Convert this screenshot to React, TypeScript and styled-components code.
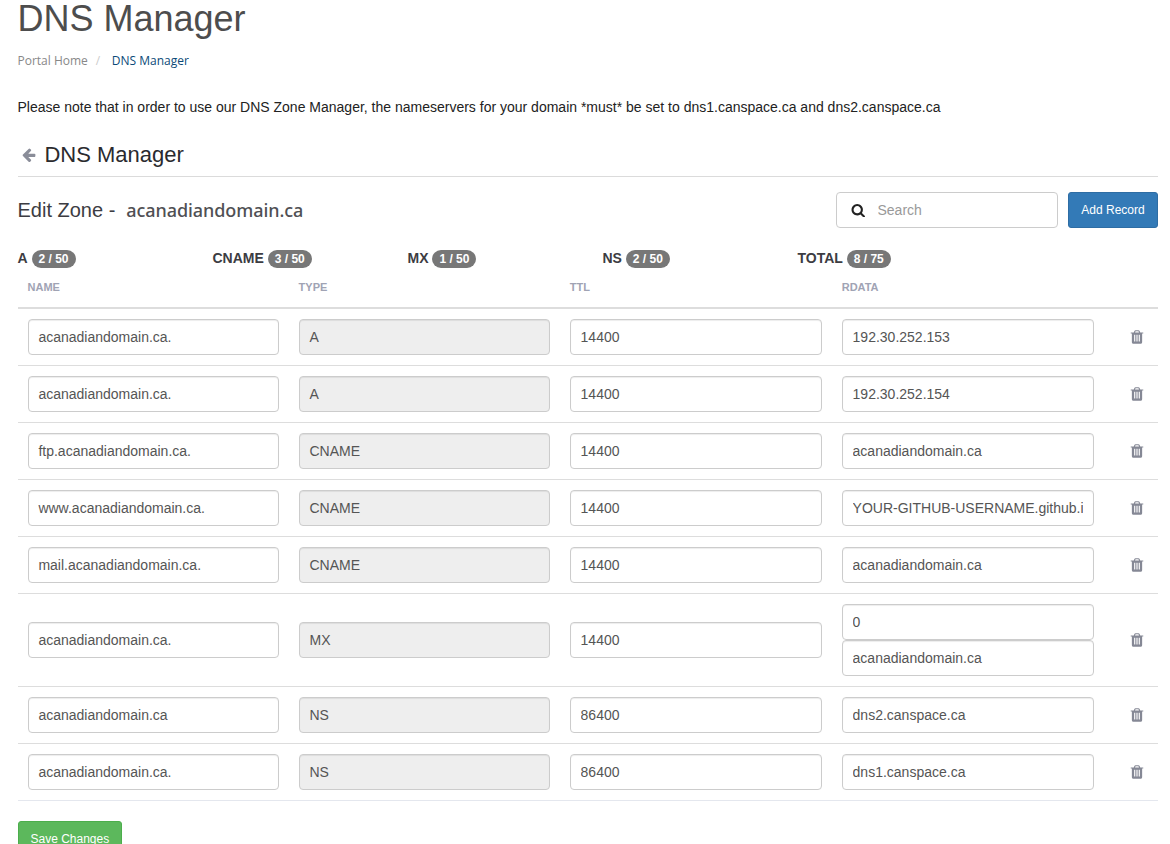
import React from "react";
import styled, { createGlobalStyle } from "styled-components";

const GlobalStyle = createGlobalStyle`
  *, *::before, *::after { box-sizing: border-box; }
  html { overflow: hidden; }
  body {
    margin: 0;
    height: 844px;
    overflow: hidden;
    background: #fff;
    color: #222;
    font: 14px/20px "Liberation Sans", Arial, sans-serif;
  }
`;

const Page = styled.main`
  width: 1140.5px;
  margin-left: 17.5px;
`;

const PageTitle = styled.h1`
  margin: 0;
  height: 51px;
  font-size: 36px;
  line-height: 38px;
  font-weight: 400;
  color: #4d4d4d;
`;

const Breadcrumb = styled.nav`
  display: flex;
  height: 20px;
  font: 12px/20px "Open Sans", sans-serif;
  color: #888;
`;

const Separator = styled.span`
  width: 24px;
  padding-left: 8px;
  color: #ccc;
`;

const Current = styled.span`
  color: #0b4a78;
`;

const Notice = styled.p`
  margin: 26px 0 0;
`;

const SectionHeader = styled.header`
  display: flex;
  align-items: center;
  height: 43px;
  margin-top: 17px;
  padding-left: 3.2px;
  border-bottom: 1px solid #dbdbdb;
`;

const SectionTitle = styled.h2`
  margin: 0 0 0 8.3px;
  font-size: 22px;
  line-height: 30px;
  font-weight: 400;
  color: #2a2a2e;
`;

const Glyph = styled.svg<{ $color: string }>`
  display: block;
  flex: none;
  fill: ${(p) => p.$color};
`;

const Toolbar = styled.div`
  display: flex;
  align-items: center;
  height: 36px;
  margin-top: 15px;
`;

const ZoneTitle = styled.h3`
  display: flex;
  align-items: baseline;
  margin: 0;
  flex: 1;
  font-size: 20px;
  line-height: 30px;
  font-weight: 400;
  color: #3c3c42;
`;

const ZoneName = styled.span`
  margin-left: 11px;
  font-family: "Noto Sans", sans-serif;
  font-size: 18px;
  font-weight: 500;
  letter-spacing: -0.08px;
  line-height: 26px;
  color: #505054;
`;

const SearchBox = styled.div`
  display: flex;
  align-items: center;
  width: 222px;
  height: 36px;
  padding-left: 13.5px;
  border: 1px solid #ccc;
  border-radius: 4px;
  background: #fff;
`;

const SearchInput = styled.input`
  width: 160px;
  margin-left: 12.5px;
  padding: 0;
  border: 0;
  outline: 0;
  font: 14px/20px "Liberation Sans", Arial, sans-serif;
  &::placeholder { color: #999; opacity: 1; }
`;

const Button = styled.button<{ $tone: "primary" | "success" }>`
  height: 36px;
  padding: 0 12px;
  border: 1px solid ${(p) => (p.$tone === "primary" ? "#2e6da4" : "#4cae4c")};
  border-radius: 3px;
  background: ${(p) => (p.$tone === "primary" ? "#337ab7" : "#5cb85c")};
  color: #fff;
  font: 12px/20px "Liberation Sans", Arial, sans-serif;
  white-space: nowrap;
`;

const AddButton = styled(Button)`
  width: 90px;
  margin-left: 10px;
`;

const SaveButton = styled(Button)`
  display: block;
  width: 104.5px;
  margin-top: 20px;
`;

const Quotas = styled.div`
  display: grid;
  grid-template-columns: repeat(5, 195px);
  margin-top: 20px;
  height: 20px;
`;

const Quota = styled.div`
  display: flex;
  align-items: center;
  gap: 3.88px;
  font-weight: 700;
  color: #3c3c42;
`;

const Badge = styled.span`
  height: 18px;
  margin-top: 2px;
  padding: 3px 7px;
  border-radius: 10px;
  background: #777;
  color: #fff;
  font-size: 12px;
  line-height: 12px;
`;

const columns = "271.1px 271.1px 272px 272px 1fr";

const TableHead = styled.div`
  display: grid;
  grid-template-columns: ${columns};
  height: 41px;
  border-bottom: 2px solid #ddd;
  color: #a0a3b4;
  font-size: 11px;
  font-weight: 700;
  line-height: 18px;
`;

const HeadCell = styled.div`
  padding: 10px 10px 0;
`;

const Row = styled.div<{ $last?: boolean }>`
  display: grid;
  grid-template-columns: ${columns};
  align-items: center;
  padding: 10px 0;
  border-bottom: 1px solid ${(p) => (p.$last ? "#e4e7ee" : "#ddd")};
`;

const Cell = styled.div`
  padding: 0 10px;
`;

const Field = styled.input`
  display: block;
  width: 100%;
  height: 36px;
  padding: 6px 9.9px;
  border: 1px solid #ccc;
  border-radius: 4px;
  outline: 0;
  background: #fff;
  box-shadow: inset 0 1px 1px rgba(0, 0, 0, 0.075);
  color: #555;
  font: 14px/20px "Liberation Sans", Arial, sans-serif;
  &:disabled { background: #eee; }
`;

const DeleteCell = styled.div`
  display: flex;
  padding-left: 25.2px;
`;

const ARROW_LEFT =
  "M1664 896v128q0 53-32.500 90.500t-84.500 37.500h-704l293 294q38 36 38 90t-38 90l-75 76q-37 37-90 37-52 0-91-37l-651-652q-37-37-37-90 0-52 37-91l651-650q38-38 91-38 52 0 90 38l75 74q38 38 38 91t-38 91l-293 293h704q52 0 84.500 37.500t32.500 90.500z";
const SEARCH =
  "M1216 832q0-185-131.500-316.500t-316.500-131.500-316.500 131.500-131.500 316.500 131.500 316.500 316.500 131.500 316.500-131.500 131.500-316.500zm512 832q0 52-38 90t-90 38q-54 0-90-38l-343-342q-179 124-399 124-143 0-273.500-55.500t-225-150-150-225-55.500-273.500 55.500-273.500 150-225 225-150 273.500-55.500 273.500 55.500 225 150 150 225 55.500 273.500q0 220-124 399l343 343q37 37 37 90z";
const TRASH =
  "M704 1376v-704q0-14-9-23t-23-9h-64q-14 0-23 9t-9 23v704q0 14 9 23t23 9h64q14 0 23-9t9-23zm256 0v-704q0-14-9-23t-23-9h-64q-14 0-23 9t-9 23v704q0 14 9 23t23 9h64q14 0 23-9t9-23zm256 0v-704q0-14-9-23t-23-9h-64q-14 0-23 9t-9 23v704q0 14 9 23t23 9h64q14 0 23-9t9-23zm-544-992h448l-48-117q-7-9-17-11h-317q-10 2-17 11zm928 32v64q0 14-9 23t-23 9h-96v948q0 83-47 143.500t-113 60.500h-832q-66 0-113-58.500t-47-141.500v-952h-96q-14 0-23-9t-9-23v-64q0-14 9-23t23-9h309l70-167q15-37 54-63t79-26h320q40 0 79 26t54 63l70 167h309q14 0 23 9t9 23z";

function Icon({ path, size, color }: { path: string; size: number; color: string }) {
  return (
    <Glyph $color={color} width={size} height={size} viewBox="0 0 1792 1792" aria-hidden="true">
      <path d={path} />
    </Glyph>
  );
}

const quotas = [
  ["A", "2 / 50"],
  ["CNAME", "3 / 50"],
  ["MX", "1 / 50"],
  ["NS", "2 / 50"],
  ["TOTAL", "8 / 75"],
];

interface ZoneRecord {
  name: string;
  type: string;
  ttl: string;
  rdata: string[];
}

const records: ZoneRecord[] = [
  { name: "acanadiandomain.ca.", type: "A", ttl: "14400", rdata: ["192.30.252.153"] },
  { name: "acanadiandomain.ca.", type: "A", ttl: "14400", rdata: ["192.30.252.154"] },
  { name: "ftp.acanadiandomain.ca.", type: "CNAME", ttl: "14400", rdata: ["acanadiandomain.ca"] },
  { name: "www.acanadiandomain.ca.", type: "CNAME", ttl: "14400", rdata: ["YOUR-GITHUB-USERNAME.github.io"] },
  { name: "mail.acanadiandomain.ca.", type: "CNAME", ttl: "14400", rdata: ["acanadiandomain.ca"] },
  { name: "acanadiandomain.ca.", type: "MX", ttl: "14400", rdata: ["0", "acanadiandomain.ca"] },
  { name: "acanadiandomain.ca", type: "NS", ttl: "86400", rdata: ["dns2.canspace.ca"] },
  { name: "acanadiandomain.ca.", type: "NS", ttl: "86400", rdata: ["dns1.canspace.ca"] },
];

export default function App() {
  return (
    <>
      <GlobalStyle />
      <Page>
        <PageTitle>DNS Manager</PageTitle>
        <Breadcrumb>
          <span>Portal Home</span>
          <Separator>/</Separator>
          <Current>DNS Manager</Current>
        </Breadcrumb>
        <Notice>
          Please note that in order to use our DNS Zone Manager, the nameservers for your domain *must* be set to
          dns1.canspace.ca and dns2.canspace.ca
        </Notice>
        <SectionHeader>
          <Icon path={ARROW_LEFT} size={15.5} color="#8a8d99" />
          <SectionTitle>DNS Manager</SectionTitle>
        </SectionHeader>
        <Toolbar>
          <ZoneTitle>
            Edit Zone -<ZoneName>acanadiandomain.ca</ZoneName>
          </ZoneTitle>
          <SearchBox>
            <Icon path={SEARCH} size={14.5} color="#222" />
            <SearchInput placeholder="Search" />
          </SearchBox>
          <AddButton $tone="primary">Add Record</AddButton>
        </Toolbar>
        <Quotas>
          {quotas.map(([label, usage]) => (
            <Quota key={label}>
              {label}
              <Badge>{usage}</Badge>
            </Quota>
          ))}
        </Quotas>
        <TableHead>
          <HeadCell>NAME</HeadCell>
          <HeadCell>TYPE</HeadCell>
          <HeadCell>TTL</HeadCell>
          <HeadCell>RDATA</HeadCell>
        </TableHead>
        {records.map((record, index) => (
          <Row key={index} $last={index === records.length - 1}>
            <Cell>
              <Field defaultValue={record.name} />
            </Cell>
            <Cell>
              <Field defaultValue={record.type} disabled />
            </Cell>
            <Cell>
              <Field defaultValue={record.ttl} />
            </Cell>
            <Cell>
              {record.rdata.map((value) => (
                <Field key={value} defaultValue={value} />
              ))}
            </Cell>
            <DeleteCell>
              <Icon path={TRASH} size={16} color="#858895" />
            </DeleteCell>
          </Row>
        ))}
        <SaveButton $tone="success">Save Changes</SaveButton>
      </Page>
    </>
  );
}
